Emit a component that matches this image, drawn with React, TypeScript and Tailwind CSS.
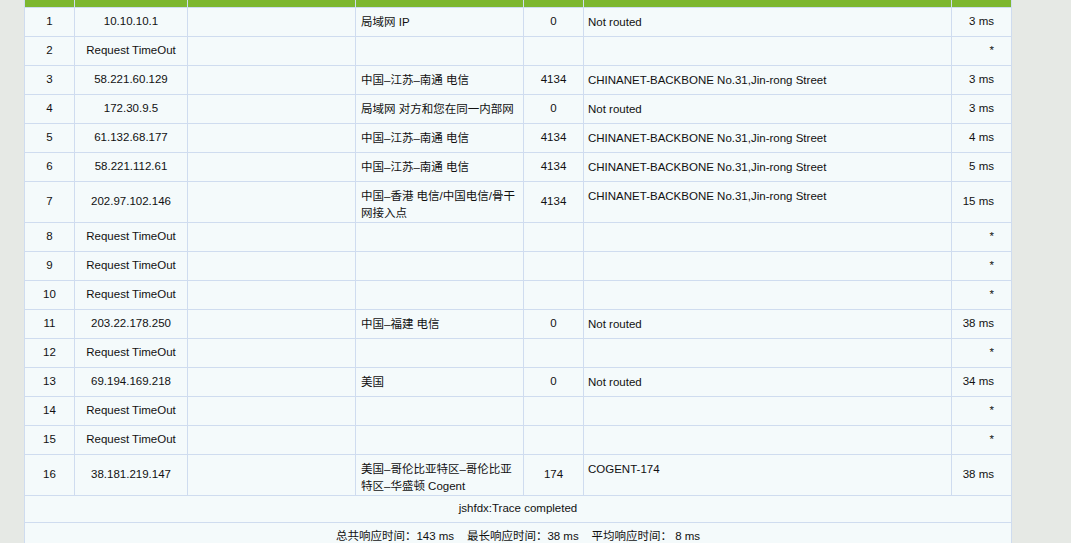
const rows: [string, string, string, string, string, string][] = [
  ["1", "10.10.10.1", "局域网 IP", "0", "Not routed", "3 ms"],
  ["2", "Request TimeOut", "", "", "", "*"],
  ["3", "58.221.60.129", "中国–江苏–南通 电信", "4134", "CHINANET-BACKBONE No.31,Jin-rong Street", "3 ms"],
  ["4", "172.30.9.5", "局域网 对方和您在同一内部网", "0", "Not routed", "3 ms"],
  ["5", "61.132.68.177", "中国–江苏–南通 电信", "4134", "CHINANET-BACKBONE No.31,Jin-rong Street", "4 ms"],
  ["6", "58.221.112.61", "中国–江苏–南通 电信", "4134", "CHINANET-BACKBONE No.31,Jin-rong Street", "5 ms"],
  ["7", "202.97.102.146", "中国–香港 电信/中国电信/骨干网接入点", "4134", "CHINANET-BACKBONE No.31,Jin-rong Street", "15 ms"],
  ["8", "Request TimeOut", "", "", "", "*"],
  ["9", "Request TimeOut", "", "", "", "*"],
  ["10", "Request TimeOut", "", "", "", "*"],
  ["11", "203.22.178.250", "中国–福建 电信", "0", "Not routed", "38 ms"],
  ["12", "Request TimeOut", "", "", "", "*"],
  ["13", "69.194.169.218", "美国", "0", "Not routed", "34 ms"],
  ["14", "Request TimeOut", "", "", "", "*"],
  ["15", "Request TimeOut", "", "", "", "*"],
  ["16", "38.181.219.147", "美国–哥伦比亚特区–哥伦比亚特区–华盛顿 Cogent", "174", "COGENT-174", "38 ms"],
];

export default function App() {
  const b = "border border-[#cfdcef]";
  return (
    <div className="w-[1071px] h-[543px] overflow-hidden bg-[#e6e9e5] pl-[24px] text-[#111] text-[11.5px]" style={{ fontFamily: '"Liberation Sans", "Noto Sans CJK SC", sans-serif' }}>
      <table className="w-[988px] border-collapse bg-[#f4fafb] table-fixed">
        <colgroup>
          <col className="w-[50px]" />
          <col className="w-[113px]" />
          <col className="w-[168px]" />
          <col className="w-[168px]" />
          <col className="w-[60px]" />
          <col className="w-[368px]" />
          <col className="w-[60px]" />
        </colgroup>
        <tbody>
          <tr className="h-[7px] bg-[#7db72f]">
            {Array.from({ length: 7 }).map((_, i) => (
              <td key={i} className="border-x border-[#cfdcef] p-0"></td>
            ))}
          </tr>
          {rows.map((r) => {
            const tall = r[0] === "7" || r[0] === "16";
            return (
              <tr key={r[0]} className={tall ? "h-[38px]" : "h-[29px]"}>
                <td className={`${b} text-center`}>{r[0]}</td>
                <td className={`${b} text-center`}>{r[1]}</td>
                <td className={b}></td>
                <td className={`${b} px-[5px] align-top pt-[6px] leading-[17px]`}>{r[2]}</td>
                <td className={`${b} text-center`}>{r[3]}</td>
                <td className={`${b} px-[4px] align-top pt-[6px]`}>{r[4]}</td>
                <td className={`${b} text-right pr-[17px]`}>{r[5]}</td>
              </tr>
            );
          })}
          <tr className="h-[27px]">
            <td colSpan={7} className={`${b} text-center`}>jshfdx:Trace completed</td>
          </tr>
          <tr className="h-[29px]">
            <td colSpan={7} className={`${b} text-center`}>
              总共响应时间：143 ms&nbsp;&nbsp;&nbsp;&nbsp;最长响应时间：38 ms&nbsp;&nbsp;&nbsp;&nbsp;平均响应时间： 8 ms
            </td>
          </tr>
        </tbody>
      </table>
    </div>
  );
}
